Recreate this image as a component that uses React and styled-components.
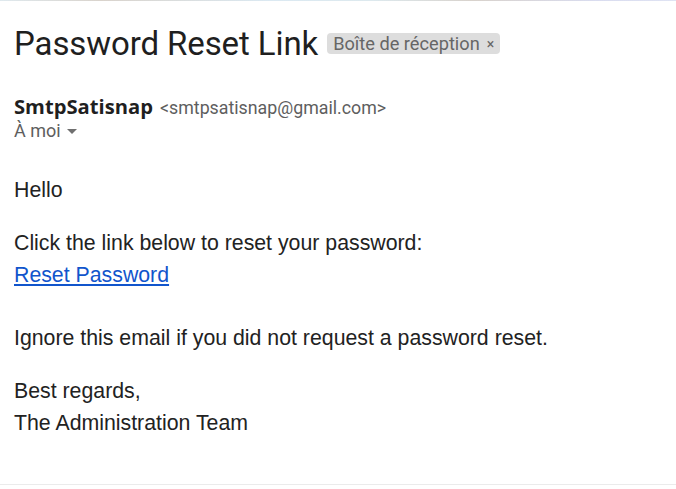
import React from 'react';
import styled, { createGlobalStyle } from 'styled-components';

const GlobalStyle = createGlobalStyle`
  html, body {
    margin: 0;
    padding: 0;
    background: #ffffff;
  }
  body {
    font-family: Roboto, "Liberation Sans", Arial, sans-serif;
  }
`;

const Page = styled.div`
  width: 676px;
  height: 489px;
  box-sizing: border-box;
  display: flex;
  flex-direction: column;
  background: #fff;
`;

const TopEdge = styled.div`
  height: 1px;
  flex: none;
  background: linear-gradient(90deg, #dfe9ee 0%, #d9d3cc 15%, #dbe9f2 40%, #dde9ee 55%, #d8d2cc 70%, #d9dcef 88%, #dfe3f3 100%);
`;

const Main = styled.div`
  flex: 1;
  padding: 0 14px;
  display: flex;
  flex-direction: column;
`;

const SubjectRow = styled.div`
  display: flex;
  align-items: center;
  gap: 9px;
  margin-top: 21px;
  height: 42px;
`;

const Subject = styled.h1`
  margin: 0;
  font-family: Roboto, "Open Sans", sans-serif;
  font-weight: 400;
  font-size: 33px;
  letter-spacing: -0.1px;
  color: #1f1f1f;
`;

const Chip = styled.span`
  display: inline-flex;
  align-items: center;
  gap: 7px;
  height: 21px;
  padding: 0 6px;
  margin-top: 1px;
  border-radius: 4px;
  background: #dddddd;
  color: #666;
  font-family: Roboto, sans-serif;
  font-size: 18.2px;
`;

const ChipClose = styled.span`
  font-size: 14px;
  color: #666;
`;

const Sender = styled.div`
  margin-top: 30px;
  display: flex;
  align-items: baseline;
  gap: 7px;
  line-height: 24px;
`;

const SenderName = styled.span`
  font-family: "Open Sans", Roboto, sans-serif;
  font-weight: 700;
  font-size: 20.2px;
  color: #1f1f1f;
`;

const SenderAddress = styled.span`
  font-size: 17.8px;
  color: #5e5e5e;
`;

const Recipient = styled.div`
  display: flex;
  align-items: center;
  gap: 6px;
  font-size: 18px;
  line-height: 22px;
  color: #5e5e5e;
`;

const Caret = styled.span`
  width: 0;
  height: 0;
  border-left: 5px solid transparent;
  border-right: 5px solid transparent;
  border-top: 5px solid #6f6f6f;
  margin-top: 1px;
`;

const Body = styled.div`
  margin-top: 32px;
  font-family: Arial, "Liberation Sans", sans-serif;
  font-size: 21.3px;
  color: #222;
  line-height: 32px;
`;

const Para = styled.p`
  margin: 0 0 ${p => p.$gap || 21}px;
`;

const Link = styled.a`
  color: #1155cc;
  text-decoration: underline;
`;

const Footer = styled.div`
  height: 1px;
  flex: none;
  background: #ebebeb;
  margin-bottom: 4px;
`;

export default function App() {
  return (
    <Page>
      <GlobalStyle />
      <TopEdge />
      <Main>
        <SubjectRow>
          <Subject>Password Reset Link</Subject>
          <Chip>
            Boîte de réception
            <ChipClose>×</ChipClose>
          </Chip>
        </SubjectRow>
        <Sender>
          <SenderName>SmtpSatisnap</SenderName>
          <SenderAddress>&lt;smtpsatisnap@gmail.com&gt;</SenderAddress>
        </Sender>
        <Recipient>
          À moi
          <Caret />
        </Recipient>
        <Body>
          <Para>Hello</Para>
          <Para $gap={31}>
            Click the link below to reset your password:
            <br />
            <Link href="#">Reset Password</Link>
          </Para>
          <Para>Ignore this email if you did not request a password reset.</Para>
          <Para>
            Best regards,
            <br />
            The Administration Team
          </Para>
        </Body>
      </Main>
      <Footer />
    </Page>
  );
}
